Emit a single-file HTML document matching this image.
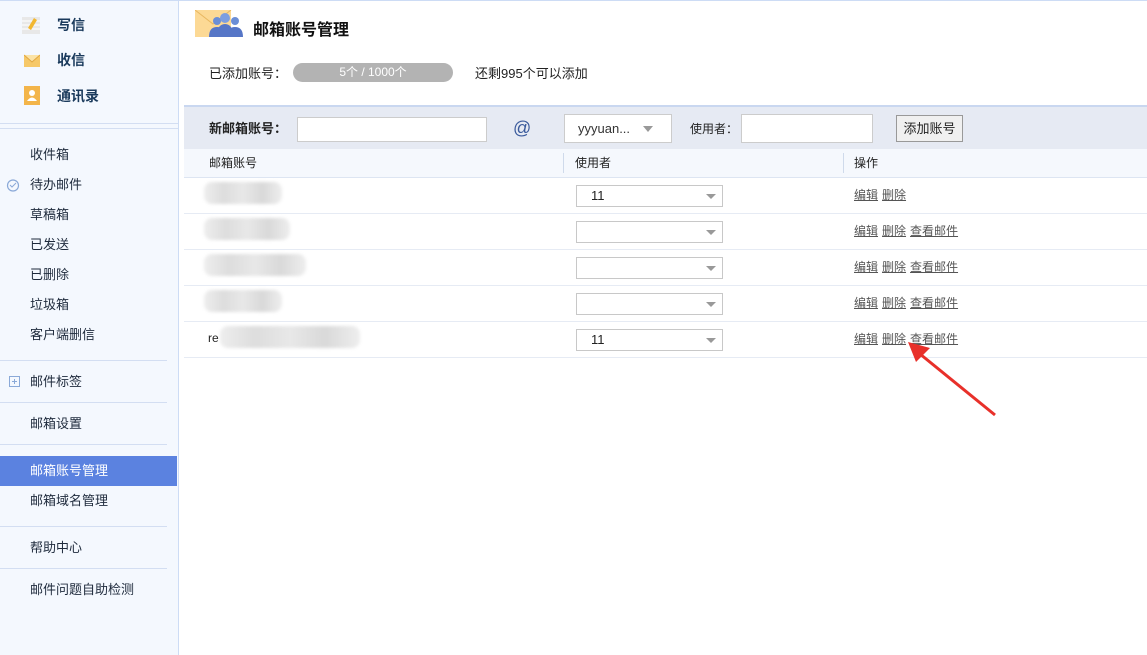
<!DOCTYPE html><html><head><meta charset="utf-8"><style>
*{margin:0;padding:0;box-sizing:border-box}
body{width:1147px;height:655px;overflow:hidden;background:#fff;font-family:"Liberation Sans","Noto Sans CJK SC",sans-serif;font-size:13px;color:#222;position:relative}
.a{position:absolute}
#side{left:0;top:0;width:179px;height:655px;background:#f4f8fe;border-right:1px solid #cddcf5;border-top:1px solid #cddcf5}
.hl{position:absolute;left:0;width:167px;height:1px;background:#d3def2}
.si{position:absolute;left:30px;font-size:13px;color:#1e2a3c;line-height:16px}
.big{position:absolute;left:57px;font-size:14px;font-weight:bold;color:#1a3a5c}
.sel{position:absolute;left:0;top:455px;width:177px;height:30px;background:#5b82e0;color:#fff;font-size:13px;padding-left:30px;line-height:30px}
.row{position:absolute;left:184px;width:963px;height:36px;border-bottom:1px solid #e6ebf4}
.sel2{position:absolute;left:392px;top:7px;width:147px;height:22px;border:1px solid #c8c8c8;background:#fff;font-size:13px;padding-left:14px;line-height:20px}
.sel2:after{content:"";position:absolute;right:6px;top:8px;border-left:5px solid transparent;border-right:5px solid transparent;border-top:5px solid #999}
.ops{position:absolute;left:670px;top:8px;font-size:12px;color:#555}
.ops span{text-decoration:underline;margin-right:4px}
.blur{position:absolute;left:20px;top:4px;height:22px;background:linear-gradient(90deg,#eee,#ddd,#e8e8e8,#d9d9d9,#eee);filter:blur(1.5px);border-radius:8px}
</style></head><body>
<div id="side" class="a">
<svg class="a" style="left:22px;top:14px" width="18" height="20"><rect x="0" y="2" width="18" height="17" fill="#e8e8e8"/><path d="M0 6h18M0 10h18M0 14h18" stroke="#fff"/><path d="M6 13l6-10 3 2-6 10z" fill="#f2b730"/></svg>
<div class="big" style="top:14px">写信</div>
<svg class="a" style="left:24px;top:50px" width="16" height="18"><rect x="0" y="4" width="16" height="12" fill="#f6c868"/><path d="M0 4l8 7 8-7" fill="#fbe3a6" stroke="#e0a640"/></svg>
<div class="big" style="top:49px">收信</div>
<svg class="a" style="left:24px;top:85px" width="16" height="19"><rect x="0" y="0" width="16" height="19" fill="#f3b54a"/><circle cx="8" cy="7" r="3" fill="#fff"/><path d="M3 15q5-7 10 0z" fill="#fff"/></svg>
<div class="big" style="top:85px">通讯录</div>
<div class="hl" style="top:122px;width:178px"></div><div class="hl" style="top:127px;width:178px"></div>
<div class="si" style="top:146px">收件箱</div>
<svg class="a" style="left:6px;top:177px" width="14" height="14"><circle cx="7" cy="7.5" r="5.5" fill="none" stroke="#8aa9d8" stroke-width="1.2"/><path d="M4 7l2 2 4-4" fill="none" stroke="#8aa9d8"/></svg>
<div class="si" style="top:176px">待办邮件</div>
<div class="si" style="top:206px">草稿箱</div>
<div class="si" style="top:236px">已发送</div>
<div class="si" style="top:266px">已删除</div>
<div class="si" style="top:296px">垃圾箱</div>
<div class="si" style="top:326px">客户端删信</div>
<div class="hl" style="top:359px"></div>
<svg class="a" style="left:9px;top:375px" width="11" height="11"><rect x=".5" y=".5" width="10" height="10" fill="none" stroke="#8aa9d8"/><path d="M5.5 3v5M3 5.5h5" stroke="#8aa9d8"/></svg>
<div class="si" style="top:373px">邮件标签</div>
<div class="hl" style="top:401px"></div>
<div class="si" style="top:415px">邮箱设置</div>
<div class="hl" style="top:443px"></div>
<div class="sel">邮箱账号管理</div>
<div class="si" style="top:492px">邮箱域名管理</div>
<div class="hl" style="top:525px"></div>
<div class="si" style="top:539px">帮助中心</div>
<div class="hl" style="top:567px"></div>
<div class="si" style="top:581px">邮件问题自助检测</div>
</div>
<div class="a" style="left:179px;top:0;width:968px;height:1px;background:#cddcf5"></div>
<svg class="a" style="left:195px;top:10px" width="50" height="27"><rect x="0" y="0" width="36" height="27" fill="#fcd995"/><path d="M0 0l18 14 18-14" fill="none" stroke="#e8b760"/><circle cx="22" cy="11" r="4" fill="#6b8ed6"/><circle cx="30" cy="8" r="5" fill="#7d9ee0"/><circle cx="40" cy="11" r="4" fill="#6b8ed6"/><path d="M14 27q0-10 8-10t8 10zM22 27q0-13 8-13t8 13zM32 27q0-10 8-10t8 10z" fill="#5676c7"/></svg>
<div class="a" style="left:253px;top:16px;font-size:16px;font-weight:bold;color:#111">邮箱账号管理</div>
<div class="a" style="left:209px;top:63px;font-size:13px">已添加账号：</div>
<div class="a" style="left:293px;top:63px;width:160px;height:19px;border-radius:10px;background:#b3b3b3;color:#fff;font-size:12px;text-align:center;line-height:19px">5个 / 1000个</div>
<div class="a" style="left:475px;top:63px;font-size:13px">还剩995个可以添加</div>
<div class="a" style="left:184px;top:105px;width:963px;height:44px;background:#e6eaf3;border-top:2px solid #c9d7f0"></div>
<div class="a" style="left:209px;top:118px;font-size:13px;font-weight:bold">新邮箱账号：</div>
<div class="a" style="left:297px;top:117px;width:190px;height:25px;background:#fff;border:1px solid #ccc"></div>
<div class="a" style="left:513px;top:118px;font-size:18px;color:#3a5a9c">@</div>
<div class="a" style="left:564px;top:114px;width:108px;height:29px;background:#fff;border:1px solid #ccc;font-size:13px;padding-left:13px;line-height:27px;color:#333">yyyuan...<span style="position:absolute;left:78px;top:11px;border-left:5px solid transparent;border-right:5px solid transparent;border-top:6px solid #999"></span></div>
<div class="a" style="left:690px;top:120px;font-size:12px">使用者：</div>
<div class="a" style="left:741px;top:114px;width:132px;height:29px;background:#fff;border:1px solid #ccc"></div>
<div class="a" style="left:896px;top:115px;width:67px;height:27px;background:#f0f0f0;border:1px solid #999;font-size:13px;text-align:center;line-height:25px">添加账号</div>
<div class="a" style="left:184px;top:149px;width:963px;height:29px;background:#f5f8fd;border-bottom:1px solid #dde5f2"></div>
<div class="a" style="left:209px;top:154px;font-size:12px">邮箱账号</div>
<div class="a" style="left:563px;top:153px;width:1px;height:20px;background:#cfdaeb"></div>
<div class="a" style="left:575px;top:154px;font-size:12px">使用者</div>
<div class="a" style="left:843px;top:153px;width:1px;height:20px;background:#cfdaeb"></div>
<div class="a" style="left:854px;top:154px;font-size:12px">操作</div>
<div class="row" style="top:178px"><div class="blur" style="width:78px"></div><div class="sel2">11</div><div class="ops"><span>编辑</span><span>删除</span></div></div>
<div class="row" style="top:214px"><div class="blur" style="width:86px"></div><div class="sel2"></div><div class="ops"><span>编辑</span><span>删除</span><span>查看邮件</span></div></div>
<div class="row" style="top:250px"><div class="blur" style="width:102px"></div><div class="sel2"></div><div class="ops"><span>编辑</span><span>删除</span><span>查看邮件</span></div></div>
<div class="row" style="top:286px"><div class="blur" style="width:78px"></div><div class="sel2"></div><div class="ops"><span>编辑</span><span>删除</span><span>查看邮件</span></div></div>
<div class="row" style="top:322px"><span class="a" style="left:24px;top:9px;font-size:12px">re</span><div class="blur" style="left:36px;width:140px"></div><div class="sel2">11</div><div class="ops"><span>编辑</span><span>删除</span><span>查看邮件</span></div></div>
<svg class="a" style="left:900px;top:330px" width="100" height="90"><path d="M95 85L20 24" stroke="#e8302a" stroke-width="3"/><path d="M8 12L30 18 16 32z" fill="#e8302a"/></svg>
</body></html>
